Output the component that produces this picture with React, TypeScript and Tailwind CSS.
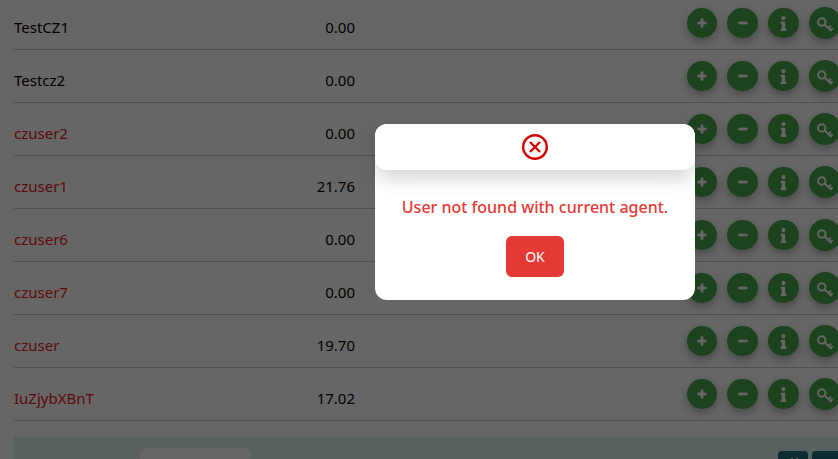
import { FaPlus, FaMinus, FaInfo, FaAngleDoubleLeft } from "react-icons/fa";

const rows = [
  { name: "TestCZ1", value: "0.00", red: false },
  { name: "Testcz2", value: "0.00", red: false },
  { name: "czuser2", value: "0.00", red: true },
  { name: "czuser1", value: "21.76", red: true },
  { name: "czuser6", value: "0.00", red: true },
  { name: "czuser7", value: "0.00", red: true },
  { name: "czuser", value: "19.70", red: true },
  { name: "IuZjybXBnT", value: "17.02", red: true },
];

function KeyIcon() {
  return (
    <svg width="18" height="18" viewBox="0 0 18 18" fill="none" stroke="currentColor">
      <circle cx="5.8" cy="8" r="3.7" strokeWidth="2" />
      <path d="M8.6 10.6 L15.6 17 M12.4 14.1 L15 11.6 M14.6 16.1 L16.6 14.2" strokeWidth="2" />
    </svg>
  );
}

function Round({ children, className }: { children: React.ReactNode; className: string }) {
  return (
    <div
      className={`flex shrink-0 items-center justify-center rounded-full bg-[#47a64b] text-white shadow-[0_4px_10px_rgba(0,0,0,0.3)] ${className}`}
    >
      {children}
    </div>
  );
}

export default function App() {
  return (
    <div className="relative h-[459px] w-[838px] overflow-hidden bg-white font-['Noto_Sans',sans-serif] text-[15px] text-black">
      <div className="-mt-[3px] pl-[14px]">
        {rows.map((r) => (
          <div key={r.name} className="flex h-[53px] items-center border-b border-[#c8c8c8]">
            <div className={`w-[200px] pt-[9px] ${r.red ? "text-[#e8141c]" : "text-black"}`}>{r.name}</div>
            <div className="w-[141px] pt-[9px] text-right">{r.value}</div>
            <div className="-mr-[3px] ml-auto flex items-center gap-[10px]">
              <Round className="h-[30px] w-[30px]"><FaPlus size={10} stroke="currentColor" strokeWidth={50} /></Round>
              <Round className="h-[30px] w-[31px]"><FaMinus size={10} stroke="currentColor" strokeWidth={50} /></Round>
              <Round className="h-[30px] w-[31px]"><FaInfo size={15} /></Round>
              <Round className="h-[32px] w-[32px]"><KeyIcon /></Round>
            </div>
          </div>
        ))}
      </div>
      <div className="mt-[16px] ml-[14px] flex h-[40px] bg-[#d8f2f0] pt-[11px] pl-[126px]">
        <div className="h-[40px] w-[111px] rounded-[6px] bg-white" />
        <div className="-mr-[10px] ml-auto flex gap-[4px] pt-[3px]">
          <div className="flex h-[30px] w-[30px] justify-center rounded-[4px] bg-[#1c6e7e] pt-[4px] text-[#d8d0c8]">
            <FaAngleDoubleLeft size={14} />
          </div>
          <div className="h-[30px] w-[36px] rounded-[4px] bg-[#1c6e7e]" />
        </div>
      </div>

      <div className="absolute inset-0 bg-black/60 pt-[124px] pl-[375px]">
        <div className="flex h-[176px] w-[320px] flex-col items-center rounded-[12px] bg-white">
          <div className="flex h-[46px] w-full items-center justify-center rounded-[12px] bg-white shadow-[0_10px_20px_-2px_rgba(0,0,0,0.18)]">
            <svg width="28" height="28" viewBox="0 0 28 28" fill="none" stroke="#d50000" strokeWidth="2.4">
              <circle cx="14" cy="14" r="11.8" />
              <path d="M9 9 L19 19 M19 9 L9 19" />
            </svg>
          </div>
          <div className="mt-[26px] text-[16px] font-medium leading-[22px] text-[#e53935]">
            User not found with current agent.
          </div>
          <button className="mt-[18px] h-[41px] w-[58px] rounded-[6px] bg-[#e53935] text-[14px] text-white">OK</button>
        </div>
      </div>
    </div>
  );
}
